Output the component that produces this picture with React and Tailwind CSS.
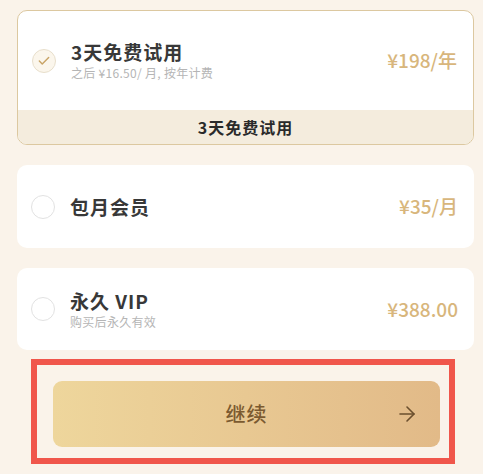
import { Check, ArrowRight } from 'lucide-react'

const font = { fontFamily: '"Noto Sans CJK SC", "Noto Sans", sans-serif' }

function Radio({ checked }) {
  if (checked) {
    return (
      <div className="flex h-6 w-6 shrink-0 items-center justify-center rounded-full border-[1.5px] border-[#e8dfcc] bg-[#fbf6ec]">
        <Check className="h-3.5 w-3.5 text-[#c9a467]" strokeWidth={2.5} />
      </div>
    )
  }
  return <div className="h-6 w-6 shrink-0 rounded-full border-[1.5px] border-[#e2e2e2] bg-white" />
}

function Plan({ title, sub, price, checked }) {
  return (
    <div className="flex h-full items-center pl-[14px] pr-[16px]">
      <Radio checked={checked} />
      <div className="ml-[15px] flex flex-col">
        <span className="text-[19px] font-semibold leading-[24px] tracking-[1px] text-[#383838]">{title}</span>
        {sub && <span className="mt-[1px] text-[12px] leading-[16px] tracking-[0.3px] text-[#b5b5b5]">{sub}</span>}
      </div>
      <span className="ml-auto text-[19px] font-medium text-[#d8b67c]">{price}</span>
    </div>
  )
}

export default function App() {
  return (
    <div className="min-h-[474px] w-[483px] bg-[#faf3ea] pt-[10px]" style={font}>
      <div className="ml-[17px] flex w-[457px] flex-col gap-[20px]">
        <div className="overflow-hidden rounded-[10px] border-[1.5px] border-[#dcc8a0] bg-white">
          <div className="h-[99px]">
            <Plan title="3天免费试用" sub="之后 ¥16.50/ 月, 按年计费" price="¥198/年" checked />
          </div>
          <div className="flex h-[34px] items-center justify-center bg-[#f4ecdd] text-[16px] font-semibold tracking-[1px] text-[#2a2a2a]">
            3天免费试用
          </div>
        </div>
        <div className="h-[83px] rounded-[10px] bg-white">
          <Plan title="包月会员" price="¥35/月" />
        </div>
        <div className="h-[82px] rounded-[10px] bg-white">
          <Plan title="永久 VIP" sub="购买后永久有效" price="¥388.00" />
        </div>
      </div>
      <div className="ml-[31px] mt-[9px] w-[424px] border-[6px] border-[#f0564b] pb-[11px] pl-[16px] pr-[9px] pt-[16px]">
        <button className="relative flex h-[66px] w-full items-center justify-center rounded-[9px] bg-gradient-to-r from-[#eed69c] to-[#e2ba88]">
          <span className="text-[20px] font-medium tracking-[1px] text-[#7b5a30]">继续</span>
          <ArrowRight className="absolute right-[21px] top-1/2 h-6 w-6 -translate-y-1/2 text-[#6b4f2e]" strokeWidth={1.6} />
        </button>
      </div>
    </div>
  )
}
